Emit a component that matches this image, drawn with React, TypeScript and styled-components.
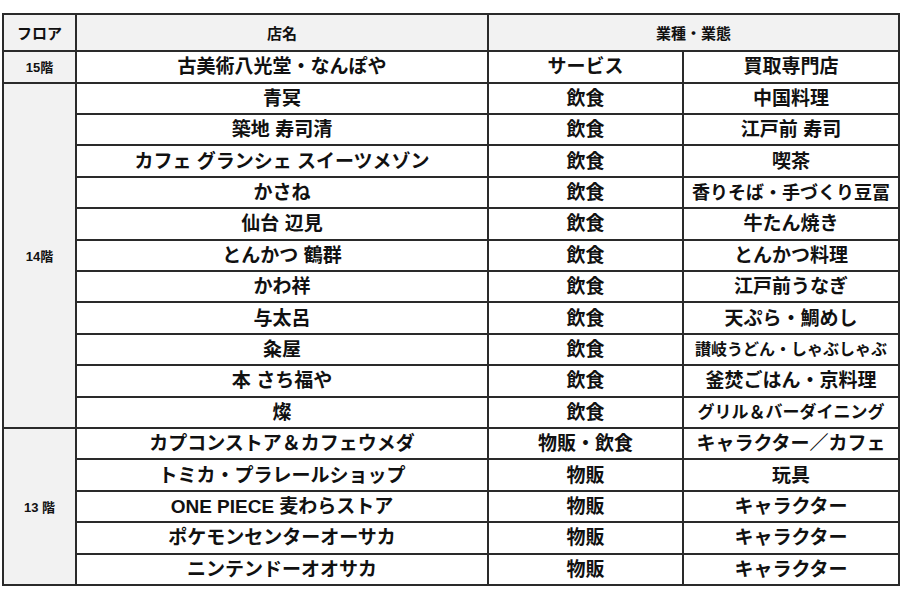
import React from "react";
import styled, { createGlobalStyle } from "styled-components";

const Global = createGlobalStyle`
  html, body { margin: 0; padding: 0; background: #ffffff; }
  body { font-family: "Liberation Sans", "Noto Sans CJK JP", sans-serif; color: #111; }
`;

const Page = styled.div`
  width: 900px;
  height: 600px;
  padding: 13px 0 0 2px;
  box-sizing: border-box;
`;

const Table = styled.table`
  border-collapse: collapse;
  table-layout: fixed;
  width: 896px;
`;

const HeadCell = styled.th`
  border: 2px solid #2a2a2a;
  background: #f2f2f2;
  font-size: 15px;
  font-weight: 700;
  height: 35px;
  padding: 0;
  text-align: center;
  vertical-align: middle;
`;

const FloorCell = styled.td`
  border: 2px solid #2a2a2a;
  background: #f2f2f2;
  font-size: 13px;
  font-weight: 700;
  padding: 0;
  text-align: center;
  vertical-align: middle;
`;

const Cell = styled.td<{ $size?: number; $h?: number }>`
  border: 2px solid #2a2a2a;
  background: #ffffff;
  font-size: ${(p) => p.$size ?? 19}px;
  font-weight: 700;
  padding: 0;
  height: ${(p) => p.$h ?? 29.4}px;
  text-align: center;
  vertical-align: middle;
  white-space: nowrap;
  overflow: hidden;
  line-height: 1;
`;

const Row = styled.tr``;

type Item = { name: string; type: string; cat: string; catSize?: number };

const floor14: Item[] = [
  { name: "青冥", type: "飲食", cat: "中国料理" },
  { name: "築地 寿司清", type: "飲食", cat: "江戸前 寿司" },
  { name: "カフェ グランシェ スイーツメゾン", type: "飲食", cat: "喫茶" },
  { name: "かさね", type: "飲食", cat: "香りそば・手づくり豆冨", catSize: 18 },
  { name: "仙台 辺見", type: "飲食", cat: "牛たん焼き" },
  { name: "とんかつ 鶴群", type: "飲食", cat: "とんかつ料理" },
  { name: "かわ祥", type: "飲食", cat: "江戸前うなぎ" },
  { name: "与太呂", type: "飲食", cat: "天ぷら・鯛めし" },
  { name: "粂屋", type: "飲食", cat: "讃岐うどん・しゃぶしゃぶ", catSize: 16 },
  { name: "本 さち福や", type: "飲食", cat: "釜焚ごはん・京料理" },
  { name: "燦", type: "飲食", cat: "グリル＆バーダイニング", catSize: 17 },
];

const floor13: Item[] = [
  { name: "カプコンストア＆カフェウメダ", type: "物販・飲食", cat: "キャラクター／カフェ" },
  { name: "トミカ・プラレールショップ", type: "物販", cat: "玩具" },
  { name: "ONE PIECE 麦わらストア", type: "物販", cat: "キャラクター" },
  { name: "ポケモンセンターオーサカ", type: "物販", cat: "キャラクター" },
  { name: "ニンテンドーオオサカ", type: "物販", cat: "キャラクター" },
];

function Group({ label, items }: { label: string; items: Item[] }) {
  return (
    <>
      {items.map((it, i) => (
        <Row key={it.name}>
          {i === 0 && <FloorCell rowSpan={items.length}>{label}</FloorCell>}
          <Cell>{it.name}</Cell>
          <Cell>{it.type}</Cell>
          <Cell $size={it.catSize}>{it.cat}</Cell>
        </Row>
      ))}
    </>
  );
}

export default function App() {
  return (
    <Page>
      <Global />
      <Table>
        <colgroup>
          <col style={{ width: 73 }} />
          <col style={{ width: 412 }} />
          <col style={{ width: 195 }} />
          <col style={{ width: 216 }} />
        </colgroup>
        <thead>
          <Row>
            <HeadCell>フロア</HeadCell>
            <HeadCell>店名</HeadCell>
            <HeadCell colSpan={2}>業種・業態</HeadCell>
          </Row>
        </thead>
        <tbody>
          <Row>
            <FloorCell>15階</FloorCell>
            <Cell $h={29.7}>古美術八光堂・なんぽや</Cell>
            <Cell $h={29.7}>サービス</Cell>
            <Cell $h={29.7}>買取専門店</Cell>
          </Row>
          <Group label="14階" items={floor14} />
          <Group label="13 階" items={floor13} />
        </tbody>
      </Table>
    </Page>
  );
}
